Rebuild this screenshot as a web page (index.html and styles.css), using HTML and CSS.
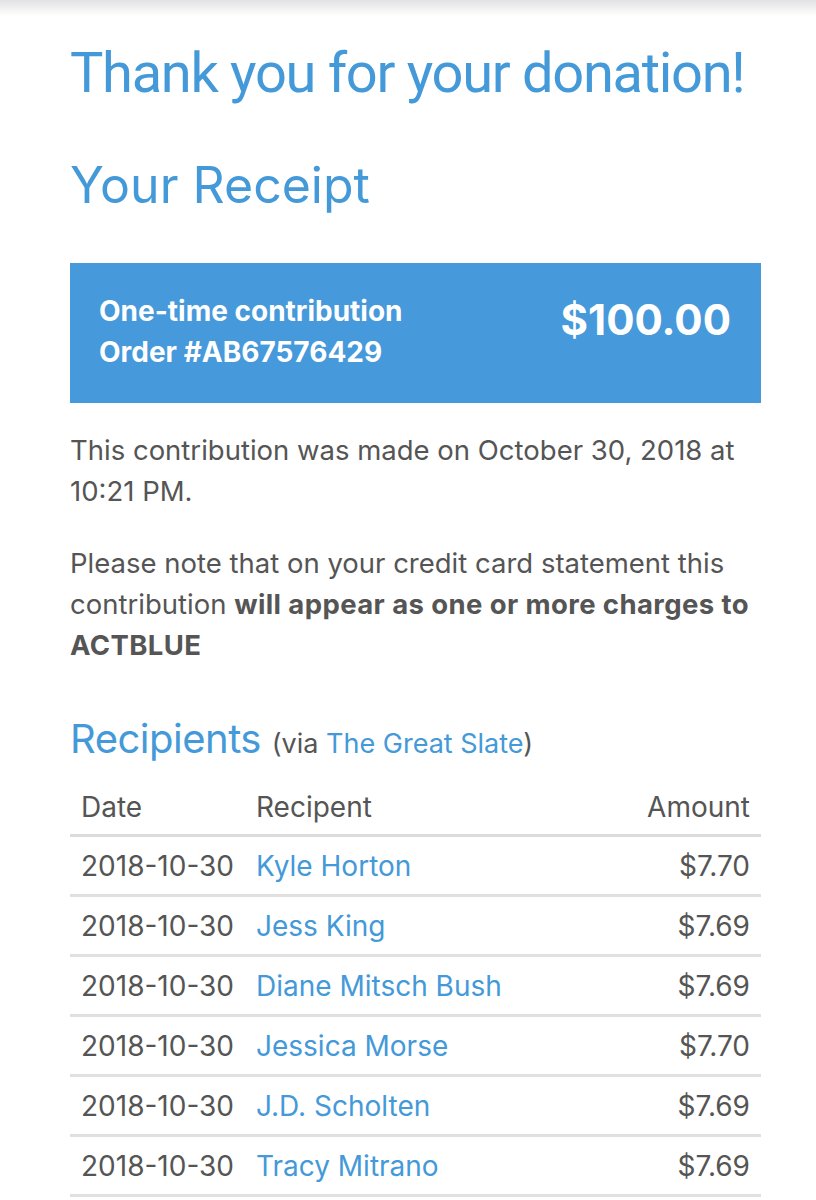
FILE: index.html
```html
<!DOCTYPE html>
<html>
<head>
<meta charset="utf-8">
<link rel="stylesheet" href="styles.css">
</head>
<body>
<div class="topshade"></div>
<main class="page">
  <h1 class="title">Thank you for your donation!</h1>
  <h2 class="subtitle">Your Receipt</h2>
  <section class="summary">
    <div class="summary-left">
      <div>One-time contribution</div>
      <div>Order #AB67576429</div>
    </div>
    <div class="summary-amount">$100.00</div>
  </section>
  <p class="text">This contribution was made on October 30, 2018 at 10:21 PM.</p>
  <p class="text text-note">Please note that on your credit card statement this contribution <strong>will appear as one or more charges to ACTBLUE</strong></p>
  <h3 class="recip-title">Recipients <span class="via">(via <a class="link">The Great Slate</a>)</span></h3>
  <table class="recip">
    <thead>
      <tr><th class="c-date">Date</th><th class="c-name">Recipent</th><th class="c-amt">Amount</th></tr>
    </thead>
    <tbody>
      <tr><td class="c-date">2018-10-30</td><td class="c-name"><a class="link">Kyle Horton</a></td><td class="c-amt">$7.70</td></tr>
      <tr><td class="c-date">2018-10-30</td><td class="c-name"><a class="link">Jess King</a></td><td class="c-amt">$7.69</td></tr>
      <tr><td class="c-date">2018-10-30</td><td class="c-name"><a class="link">Diane Mitsch Bush</a></td><td class="c-amt">$7.69</td></tr>
      <tr><td class="c-date">2018-10-30</td><td class="c-name"><a class="link">Jessica Morse</a></td><td class="c-amt">$7.70</td></tr>
      <tr><td class="c-date">2018-10-30</td><td class="c-name"><a class="link">J.D. Scholten</a></td><td class="c-amt">$7.69</td></tr>
      <tr><td class="c-date">2018-10-30</td><td class="c-name"><a class="link">Tracy Mitrano</a></td><td class="c-amt">$7.69</td></tr>
    </tbody>
  </table>
</main>
</body>
</html>
```

FILE: styles.css
```css
html, body {
  margin: 0;
  padding: 0;
  background: #fff;
}
body {
  font-family: Inter, Roboto, "Liberation Sans", sans-serif;
  color: #555;
  overflow: hidden;
}
.topshade {
  height: 16px;
  background: linear-gradient(#e2e2e4, #ffffff);
}
.page {
  width: 691px;
  margin-left: 70px;
}
.title {
  margin: 22px 0 0 0;
  font-family: Roboto, Inter, sans-serif;
  font-size: 56px;
  font-weight: 400;
  line-height: 70px;
  color: #4499d9;
  letter-spacing: -1.3px;
  white-space: nowrap;
}
.subtitle {
  margin: 47px 0 0 0;
  font-size: 50px;
  font-weight: 400;
  line-height: 60px;
  color: #4499d9;
  letter-spacing: 0;
}
.summary {
  margin-top: 48px;
  height: 140px;
  box-sizing: border-box;
  background: #4699da;
  color: #fff;
  display: flex;
  justify-content: space-between;
  align-items: flex-start;
  padding: 28px 30px 0 29px;
  font-weight: 700;
}
.summary-left {
  font-size: 28px;
  line-height: 41px;
}
.summary-amount {
  font-size: 42px;
  line-height: 50px;
  margin-top: 4px;
}
.text {
  margin: 27px 0 0 0;
  font-size: 27.5px;
  line-height: 41px;
}
.text-note {
  margin-top: 31px;
}
.text strong {
  font-weight: 700;
  letter-spacing: 0.4px;
}
.recip-title {
  margin: 48px 0 0 0;
  font-size: 40px;
  font-weight: 400;
  line-height: 50px;
  color: #4499d9;
  letter-spacing: -0.5px;
}
.via {
  font-size: 27px;
  color: #555;
  letter-spacing: 0;
}
.link {
  color: #4499d9;
  text-decoration: none;
}
.recip {
  width: 100%;
  border-collapse: collapse;
  margin-top: 10px;
  font-size: 28px;
}
.recip th {
  font-weight: 400;
  text-align: left;
  height: 55px;
  padding: 0 11px;
  border-bottom: 3px solid #dcdcdc;
}
.recip td {
  height: 57px;
  padding: 0 11px;
  border-bottom: 3px solid #e0e0e0;
}
.recip .c-date {
  width: 153px;
}
.recip .c-amt {
  text-align: right;
}
```
